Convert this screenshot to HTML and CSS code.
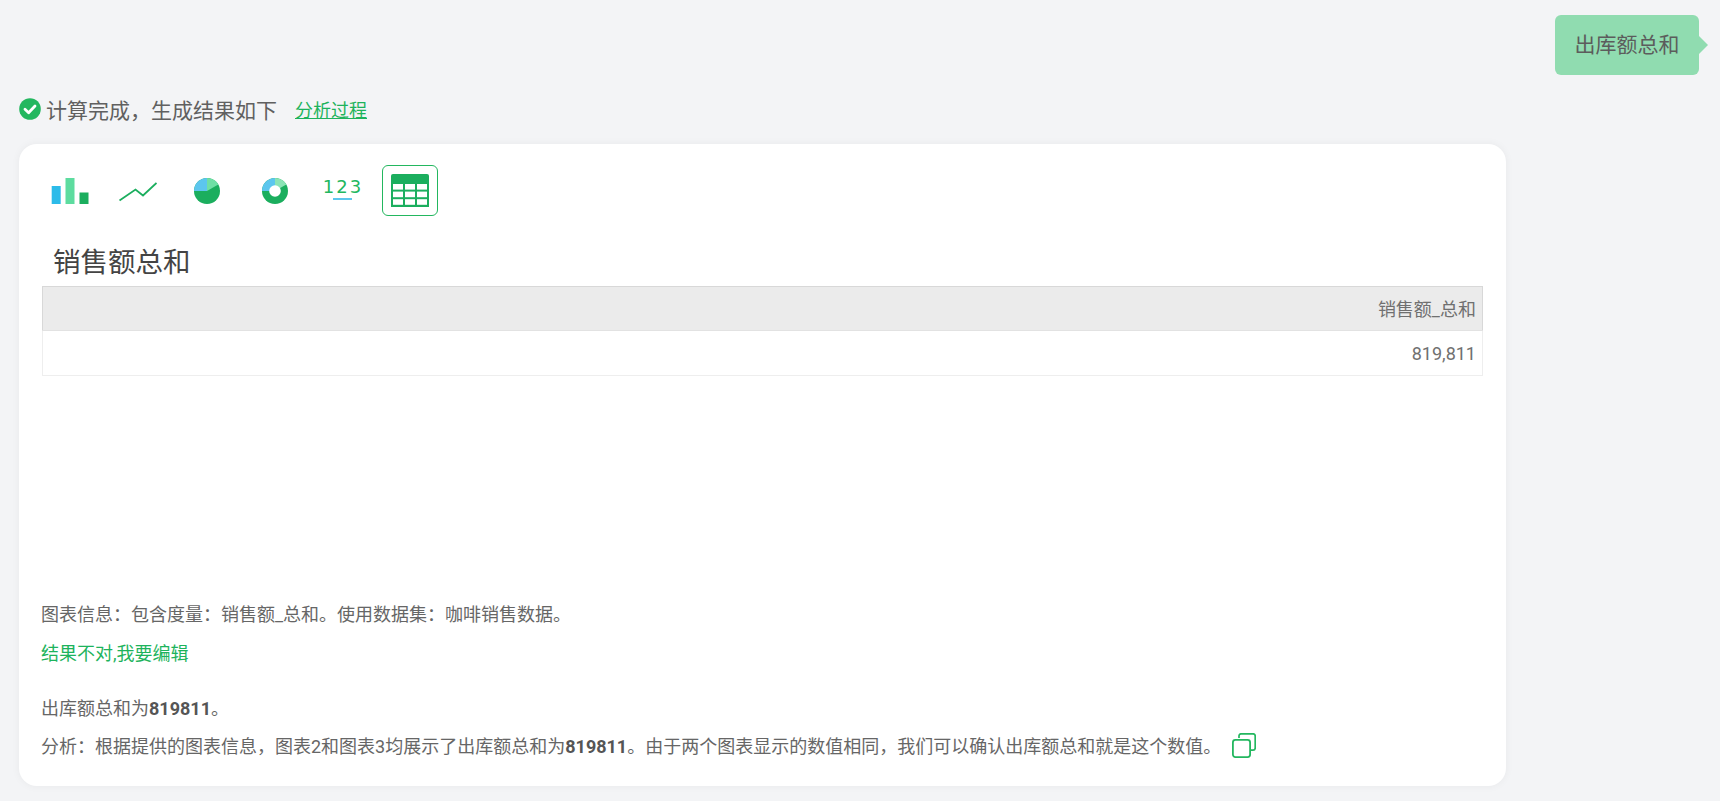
FILE: index.html
```html
<!DOCTYPE html>
<html lang="zh">
<head>
<meta charset="utf-8">
<title>出库额总和</title>
<link rel="stylesheet" href="styles.css">
</head>
<body>
<div class="question-row">
  <div class="bubble">出库额总和</div>
</div>
<div class="status-row">
  <svg class="check" viewBox="0 0 22 22" width="22" height="22"><circle cx="11" cy="11" r="10.8" fill="#23b75f"/><path d="M6 11.3l3.6 3.4L16 8" fill="none" stroke="#fff" stroke-width="2.8" stroke-linecap="round" stroke-linejoin="round"/></svg>
  <span class="status-text">计算完成，生成结果如下</span>
  <a class="process-link">分析过程</a>
</div>
<main class="card">
  <div class="toolbar">
    <div class="tool"><svg viewBox="0 0 38 26" width="38" height="26"><rect x="0.700" y="8" width="9" height="18" fill="#2cbbe9"/><rect x="14.500" y="0" width="9" height="26" fill="#5ddc9f"/><rect x="28.500" y="14.500" width="9" height="11.500" fill="#1bae5e"/></svg></div>
    <div class="tool"><svg viewBox="0 0 38 22" width="38" height="22"><path d="M0.500 20.500L16.500 9.500L24 15.500L37.500 3" fill="none" stroke="#1bae5e" stroke-width="1.800"/></svg></div>
    <div class="tool tool-round"><svg viewBox="0 0 26 26" width="26" height="26"><circle cx="13" cy="13" r="13" fill="#1bae5e"/><path d="M13 13V0A13 13 0 0 0 0 13Z" fill="#5cc6ee"/><path d="M13 13V0A13 13 0 0 1 24.300 6.500Z" fill="#6fdfa5"/></svg></div>
    <div class="tool tool-round"><svg viewBox="0 0 26 26" width="26" height="26"><circle cx="13" cy="13" r="13" fill="#1bae5e"/><path d="M13 13V0A13 13 0 0 0 0 13Z" fill="#5cc6ee"/><path d="M13 13V0A13 13 0 0 1 24.300 6.500Z" fill="#8be4b5"/><circle cx="13" cy="13" r="5.800" fill="#fff"/></svg></div>
    <div class="tool tool-num"><span class="digits">123</span><span class="digits-line"></span></div>
    <div class="tool tool-active"><svg viewBox="0 0 38 33" width="38" height="33"><path d="M2 0H36a2 2 0 0 1 2 2V33H0V2A2 2 0 0 1 2 0Z" fill="#1bae5e"/><g fill="#fff"><rect x="2" y="10" width="10" height="5.600"/><rect x="14" y="10" width="10" height="5.600"/><rect x="26" y="10" width="10" height="5.600"/><rect x="2" y="17.600" width="10" height="5.600"/><rect x="14" y="17.600" width="10" height="5.600"/><rect x="26" y="17.600" width="10" height="5.600"/><rect x="2" y="25.200" width="10" height="5.600"/><rect x="14" y="25.200" width="10" height="5.600"/><rect x="26" y="25.200" width="10" height="5.600"/></g></svg></div>
  </div>
  <h2 class="chart-title">销售额总和</h2>
  <table class="data-table">
    <thead><tr><th>销售额_总和</th></tr></thead>
    <tbody><tr><td>819,811</td></tr></tbody>
  </table>
  <p class="info">图表信息：包含度量：销售额_总和。使用数据集：咖啡销售数据。</p>
  <a class="edit-link">结果不对,我要编辑</a>
  <p class="answer">出库额总和为<b>819811</b>。</p>
  <p class="analysis"><span>分析：根据提供的图表信息，图表2和图表3均展示了出库额总和为<b>819811</b>。由于两个图表显示的数值相同，我们可以确认出库额总和就是这个数值。</span>
    <svg class="copy" viewBox="0 0 24 25" width="24" height="25"><path d="M7 5V3a2.200 2.200 0 0 1 2.200-2.200H21A2.200 2.200 0 0 1 23.200 3V15a2.200 2.200 0 0 1-2.200 2.200H19" fill="none" stroke="#23b75f" stroke-width="1.700"/><rect x="0.900" y="6.900" width="17.200" height="17.200" rx="2.500" fill="none" stroke="#23b75f" stroke-width="1.800"/></svg>
  </p>
</main>
</body>
</html>
```

FILE: styles.css
```css
* { box-sizing: border-box; }
html, body { margin: 0; height: 100%; }
body {
  background: #f3f4f6;
  color: #666;
  font-family: Roboto, "Noto Sans CJK SC", sans-serif;
  font-size: 18px;
  overflow: hidden;
  padding: 15px 12px 0 19px;
}
.question-row { display: flex; justify-content: flex-end; height: 60px; }
.bubble {
  position: relative;
  width: 144px;
  height: 60px;
  background: #90dcb0;
  border-radius: 6px;
  font-size: 21px;
  line-height: 60px;
  text-align: center;
  margin-right: 9px;
  color: #5c5c5c;
}
.bubble::after {
  content: "";
  position: absolute;
  right: -9px;
  top: 21px;
  border-left: 9px solid #90dcb0;
  border-top: 9px solid transparent;
  border-bottom: 9px solid transparent;
}
.status-row {
  display: flex;
  align-items: center;
  height: 28px;
  margin-top: 20px;
  margin-bottom: 21px;
}
.check { flex: none; }
.status-text { font-size: 21px; margin-left: 5px; color: #606060; }
.process-link {
  font-size: 18px;
  color: #1db35c;
  text-decoration: underline;
  margin-left: 18px;
}
.card {
  width: 1487px;
  height: 642px;
  padding: 21px 23px 0;
  background: #fff;
  border-radius: 18px;
  box-shadow: 0 0 8px rgba(0, 0, 0, 0.05);
}
.toolbar { display: flex; gap: 12px; height: 51px; }
.tool {
  width: 56px;
  height: 51px;
  display: flex;
  align-items: center;
  justify-content: center;
  flex-direction: column;
}
.tool-round svg { margin-left: 2px; }
.tool-num { padding-bottom: 5px; }
.tool-active { border: 1px solid #23b75f; border-radius: 6px; }
.digits {
  font-family: "DejaVu Sans", sans-serif;
  font-size: 18px;
  line-height: 22px;
  letter-spacing: 2px;
  margin-right: -2px;
  color: #23b75f;
}
.digits-line { width: 19px; height: 2px; background: #5cc6ee; }
.chart-title {
  margin: 25px 0 1px 11px;
  font-size: 27.500px;
  font-weight: 400;
  line-height: 44px;
  color: #444;
}
.data-table {
  width: 1441px;
  border-collapse: collapse;
  table-layout: fixed;
}
.data-table th, .data-table td {
  padding: 0 6px;
  text-align: right;
  font-size: 18px;
  font-weight: 400;
  color: #707070;
}
.data-table th { height: 44px; padding-bottom: 2px; background: #ebebeb; border: 1px solid #d8d8d8; border-bottom-color: #e2e2e2; }
.data-table td { height: 45px; border: 1px solid #eee; border-top: 0; }
.info { margin: 225px 0 0 -1px; line-height: 28px; }
.edit-link { display: block; margin: 11px 0 0 -1px; line-height: 28px; color: #1db35c; }
.answer { margin: 27px 0 0 -1px; line-height: 28px; }
.analysis {
  display: flex;
  align-items: center;
  margin: 10px 0 0 -1px;
  line-height: 28px;
}
.analysis b, .answer b { color: #555; }
.copy { margin-left: 11px; flex: none; margin-top: -3px; }
```
